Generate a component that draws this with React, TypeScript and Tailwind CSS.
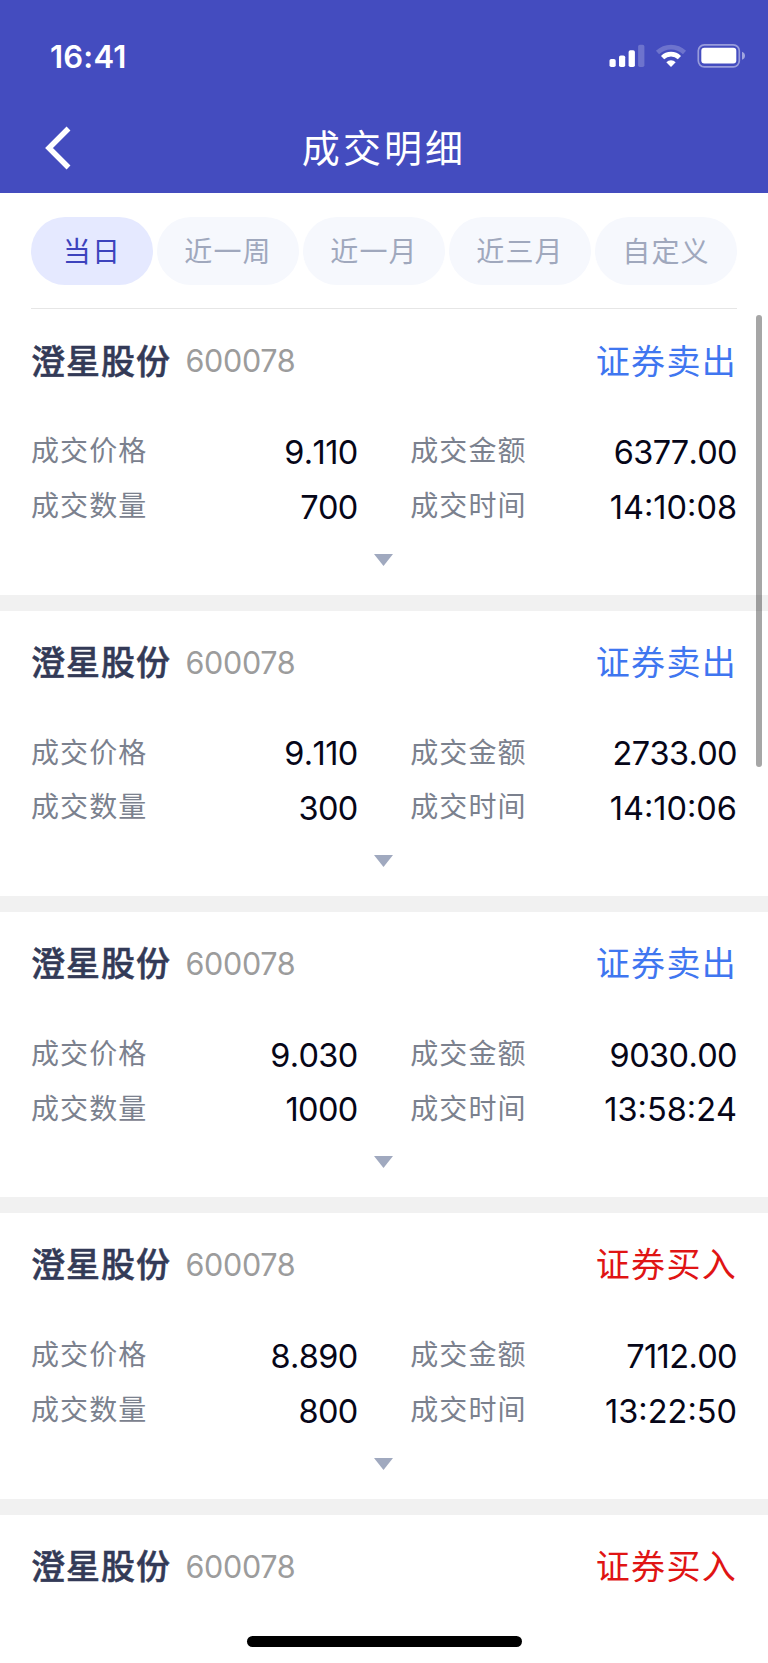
import React, { useState } from 'react';

interface Deal {
  id: number;
  name: string;
  code: string;
  side: 'sell' | 'buy';
  detail?: {
    price: string;
    amount: string;
    volume: string;
    time: string;
  };
}

const tabs = [
  { id: 'day', label: '当日', width: 'w-[122px]' },
  { id: 'week', label: '近一周', width: 'w-[142px]' },
  { id: 'month', label: '近一月', width: 'w-[142px]' },
  { id: 'quarter', label: '近三月', width: 'w-[142px]' },
  { id: 'custom', label: '自定义', width: 'w-[142px]' },
];

const deals: Deal[] = [
  { id: 1, name: '澄星股份', code: '600078', side: 'sell', detail: { price: '9.110', amount: '6377.00', volume: '700', time: '14:10:08' } },
  { id: 2, name: '澄星股份', code: '600078', side: 'sell', detail: { price: '9.110', amount: '2733.00', volume: '300', time: '14:10:06' } },
  { id: 3, name: '澄星股份', code: '600078', side: 'sell', detail: { price: '9.030', amount: '9030.00', volume: '1000', time: '13:58:24' } },
  { id: 4, name: '澄星股份', code: '600078', side: 'buy', detail: { price: '8.890', amount: '7112.00', volume: '800', time: '13:22:50' } },
  { id: 5, name: '澄星股份', code: '600078', side: 'buy' },
];

const StatusIcons = () => (
  <svg width="138" height="26" viewBox="0 0 138 26" fill="#fff">
    <rect x="0.5" y="16" width="6.2" height="8" rx="1.8" />
    <rect x="10" y="12.5" width="6.2" height="11.5" rx="1.8" />
    <rect x="19.6" y="7.3" width="6.3" height="16.7" rx="1.8" />
    <rect x="29.1" y="1.8" width="6.3" height="22.2" rx="1.8" opacity="0.22" />
    <path d="M48.5 9.5A19.6 19.6 0 0 1 75.5 9.5" fill="none" stroke="#fff" strokeWidth="4.6" opacity="0.22" />
    <path d="M53.6 14.6A12 12 0 0 1 70.4 14.6" fill="none" stroke="#fff" strokeWidth="4.6" />
    <path d="M57.3 19.2A6.8 6.8 0 0 1 66.7 19.2L62 24Z" />
    <rect x="89.3" y="1.8" width="41" height="22" rx="6" fill="none" stroke="#fff" strokeWidth="1.7" opacity="0.45" />
    <rect x="92.3" y="4.8" width="35" height="15.8" rx="3" />
    <path d="M133 8.8C137 10 137 15.6 133 16.8Z" opacity="0.5" />
  </svg>
);

const Field = ({ label, value, tracking = 'tracking-[-0.6px]' }: { label: string; value: string; tracking?: string }) => (
  <div className="flex h-[54.6px] items-center justify-between">
    <span className="text-[28px] leading-none tracking-[1.1px] text-[#7b818e]">{label}</span>
    <span className={`relative top-[2px] text-[32.5px] leading-none text-[#060618] [font-kerning:none] ${tracking}`}>{value}</span>
  </div>
);

const DealCard = ({ deal }: { deal: Deal }) => (
  <div className="h-[301.33px] shrink-0 border-b-[16.33px] border-[#f1f1f1] bg-white px-[31px]">
    <div className="flex h-[104px] items-center justify-between">
      <div className="flex items-center">
        <span className="text-[34px] font-medium leading-none tracking-[1px] text-[#333a57] [-webkit-text-stroke:0.5px_#333a57]">{deal.name}</span>
        <span className="ml-[14.5px] text-[30.5px] leading-none tracking-[-0.3px] text-[#9c9c9c]">{deal.code}</span>
      </div>
      <span className={`text-[34px] leading-none tracking-[1.3px] ${deal.side === 'sell' ? 'text-[#3f76f0]' : 'text-[#e01414]'}`}>
        {deal.side === 'sell' ? '证券卖出' : '证券买入'}
      </span>
    </div>
    {deal.detail && (
      <>
        <div className="grid grid-cols-2 gap-x-[52.5px] pt-[10.5px]">
          <Field label="成交价格" value={deal.detail.price} />
          <Field label="成交金额" value={deal.detail.amount} />
          <Field label="成交数量" value={deal.detail.volume} />
          <Field label="成交时间" value={deal.detail.time} tracking="tracking-normal" />
        </div>
        <div className="flex justify-center pr-px pt-[20.5px]">
          <svg width="19" height="12" viewBox="0 0 19 12" fill="#a0a9bf">
            <path d="M0 0H19L9.5 12Z" />
          </svg>
        </div>
      </>
    )}
  </div>
);

const App: React.FC = () => {
  const [activeTab, setActiveTab] = useState('day');

  return (
    <div className="relative flex h-[1663px] w-[768px] flex-col overflow-hidden bg-white font-['Inter','Noto_Sans_CJK_SC',sans-serif]">
      <header className="h-[192.5px] shrink-0 bg-[#444cbf] text-white">
        <div className="flex h-[104px] items-center justify-between pl-[50px] pr-[21px] pt-2">
          <span className="text-[31px] font-semibold leading-none tracking-[0.2px]">16:41</span>
          <StatusIcons />
        </div>
        <div className="grid h-[87px] grid-cols-[1fr_auto_1fr] items-center">
          <svg className="ml-[45px]" width="26" height="44" viewBox="0 0 26 44" fill="none" stroke="#fff" strokeWidth="5.5">
            <path d="M23.5 2.5L4 22L23.5 41.5" />
          </svg>
          <h1 className="pt-px text-[38px] leading-none tracking-[3.1px]">成交明细</h1>
        </div>
      </header>

      <div className="mx-[31px] flex h-[116.5px] shrink-0 justify-between border-b border-[#e6e6e6] pt-[24.5px]">
        {tabs.map(tab => (
          <button
            key={tab.id}
            onClick={() => setActiveTab(tab.id)}
            className={`h-[68px] rounded-full pt-[2px] text-[28px] leading-none tracking-[1.2px] ${tab.width} ${
              activeTab === tab.id ? 'bg-[#e5e9ff] text-[#3d43bd]' : 'bg-[#f6f8fd] text-[#a0a8bd]'
            }`}
          >
            {tab.label}
          </button>
        ))}
      </div>

      <main className="flex min-h-0 flex-1 flex-col overflow-hidden pt-[0.5px]">
        {deals.map(deal => (
          <DealCard key={deal.id} deal={deal} />
        ))}
      </main>

      {/* Scroll thumb and home indicator float over the list */}
      <div className="absolute left-[755.5px] top-[315px] h-[452px] w-[6.5px] rounded-full bg-black/35"></div>
      <div className="absolute bottom-[16px] left-[247px] h-[11px] w-[275px] rounded-full bg-black"></div>
    </div>
  );
};

export default App;
